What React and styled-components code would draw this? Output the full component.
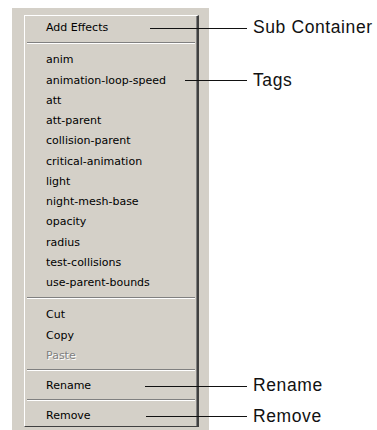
import React from 'react';
import styled, { createGlobalStyle } from 'styled-components';

const Global = createGlobalStyle`
  html, body {
    margin: 0;
    background: #fff;
    overflow: hidden;
  }
`;

const Panel = styled.div`
  box-sizing: border-box;
  width: 197px;
  height: 422px;
  margin: 8px 0 0 12px;
  padding: 7px 10px 0 12px;
  background: #d4d0c8;
`;

const Menu = styled.div`
  box-sizing: border-box;
  width: 175px;
  padding: 1px 0 0;
  border-top: 1px solid #fff;
  border-left: 1px solid #fff;
  border-right: 2px solid #404040;
  border-bottom: 1px solid #404040;
  box-shadow: inset -1px 0 0 #808080;
  font-family: Tahoma, "DejaVu Sans", sans-serif;
  font-size: 11px;
`;

const Item = styled.div`
  position: relative;
  height: 20.25px;
  line-height: 22px;
  padding-left: 21px;
  color: ${p => (p.$disabled ? '#808080' : '#000')};
  text-shadow: ${p => (p.$disabled ? '1px 1px 0 #fff' : 'none')};
  white-space: nowrap;
`;

const Separator = styled.div`
  margin: ${p => p.$gap}px 2px;
  height: 0;
  border-top: 1px solid #808080;
  border-bottom: 1px solid #fff;
`;

const Callout = styled.div`
  position: absolute;
  top: 1px;
  bottom: -1px;
  left: ${p => p.$from - 25}px;
  display: flex;
  align-items: center;
  gap: 6px;
  font-family: "Liberation Sans", Arial, sans-serif;
  font-size: 17.5px;
  letter-spacing: 0.6px;
  line-height: 1;
  color: #111;
  text-shadow: none;
`;

const Leader = styled.span`
  display: block;
  width: ${p => 247 - p.$from}px;
  height: 1px;
  background: #111;
`;

function MenuItem({ label, disabled, callout, from }) {
  return (
    <Item $disabled={disabled}>
      {label}
      {callout && (
        <Callout $from={from}>
          <Leader $from={from} />
          <span>{callout}</span>
        </Callout>
      )}
    </Item>
  );
}

const tags = [
  'anim',
  'animation-loop-speed',
  'att',
  'att-parent',
  'collision-parent',
  'critical-animation',
  'light',
  'night-mesh-base',
  'opacity',
  'radius',
  'test-collisions',
  'use-parent-bounds',
];

export default function App() {
  return (
    <>
      <Global />
      <Panel>
        <Menu>
          <MenuItem label="Add Effects" callout="Sub Container" from={150} />
          <Separator $gap={5} />
          {tags.map(t =>
            t === 'animation-loop-speed' ? (
              <MenuItem key={t} label={t} callout="Tags" from={185} />
            ) : (
              <MenuItem key={t} label={t} />
            )
          )}
          <Separator $gap={5} />
          <MenuItem label="Cut" />
          <MenuItem label="Copy" />
          <MenuItem label="Paste" disabled />
          <Separator $gap={4} />
          <MenuItem label="Rename" callout="Rename" from={145} />
          <Separator $gap={4} />
          <MenuItem label="Remove" callout="Remove" from={146} />
        </Menu>
      </Panel>
    </>
  );
}
